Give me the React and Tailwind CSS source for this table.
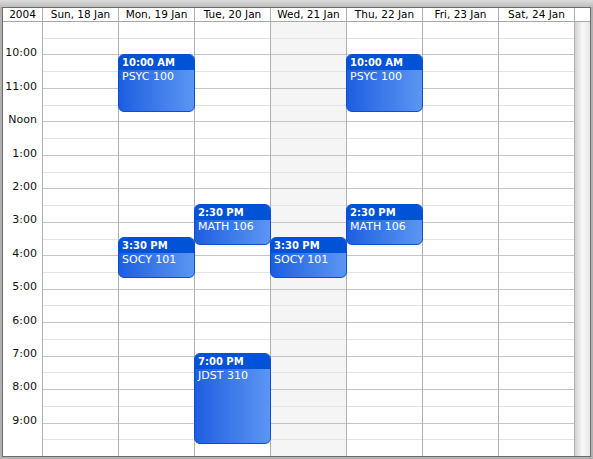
const days = [
  "Sun, 18 Jan",
  "Mon, 19 Jan",
  "Tue, 20 Jan",
  "Wed, 21 Jan",
  "Thu, 22 Jan",
  "Fri, 23 Jan",
  "Sat, 24 Jan",
];

const hours = ["10:00", "11:00", "Noon", "1:00", "2:00", "3:00", "4:00", "5:00", "6:00", "7:00", "8:00", "9:00", ""];

// top / height in px from the 9:00 line
const events = {
  1: [
    { time: "10:00 AM", title: "PSYC 100", top: 32, height: 58 },
    { time: "3:30 PM", title: "SOCY 101", top: 215, height: 41 },
  ],
  2: [
    { time: "2:30 PM", title: "MATH 106", top: 182, height: 41 },
    { time: "7:00 PM", title: "JDST 310", top: 331, height: 91 },
  ],
  3: [{ time: "3:30 PM", title: "SOCY 101", top: 215, height: 41 }],
  4: [
    { time: "10:00 AM", title: "PSYC 100", top: 32, height: 58 },
    { time: "2:30 PM", title: "MATH 106", top: 182, height: 41 },
  ],
};

const rows = Array.from({ length: 26 }, (_, i) => i);

function EventBlock({ ev }) {
  return (
    <div
      className="absolute -left-px w-[77px] rounded-[6px] border border-[#0b4fcf] overflow-hidden flex flex-col bg-gradient-to-r from-[#1d5ee0] to-[#5c95f3] z-10"
      style={{ top: ev.top, height: ev.height }}
    >
      <div className="h-[15px] bg-[#0052d6] text-white font-bold text-[10px] leading-[15px] pl-[3px]">
        {ev.time}
      </div>
      <div className="text-white text-[11px] leading-[14px] pl-[3px]">{ev.title}</div>
    </div>
  );
}

export default function App() {
  return (
    <div
      className="w-[593px] h-[459px] bg-[#b2b2b2] flex flex-col overflow-hidden"
      style={{ fontFamily: '"DejaVu Sans", Verdana, sans-serif' }}
    >
      <div className="h-[7px] bg-gradient-to-b from-[#dcdcdc] to-[#bdbdbd]" />
      <div className="mx-[2px] h-[450px] border border-[#6b6b6b] bg-white flex flex-col">
        {/* header */}
        <div className="h-[14px] flex border-b border-[#a8a8a8] text-[10.5px] leading-[13px] text-black">
          <div className="w-[40px] border-r border-[#b0b0b0] text-center">2004</div>
          {days.map((d) => (
            <div key={d} className="w-[76px] border-r border-[#b0b0b0] text-center">
              {d}
            </div>
          ))}
          <div className="flex-1" />
        </div>

        {/* body */}
        <div className="flex-1 flex">
          <div className="w-[40px] border-r border-[#b0b0b0] flex flex-col text-[11px] text-[#111]">
            {hours.map((h, i) => (
              <div key={i} className="flex-1 flex items-end justify-end pr-[5px]">
                <span className="leading-[12px] translate-y-[4px]">{h}</span>
              </div>
            ))}
          </div>
          {days.map((d, di) => (
            <div
              key={d}
              className={`w-[76px] border-r border-[#b0b0b0] relative flex flex-col ${
                di === 3 ? "bg-[#f5f5f5]" : "bg-white"
              }`}
            >
              {rows.map((r) => (
                <div
                  key={r}
                  className={`flex-1 ${
                    r === 25 ? "" : r % 2 === 0 ? "border-b border-[#e3e3e3]" : "border-b border-[#c4c4c4]"
                  }`}
                />
              ))}
              {(events[di] || []).map((ev, i) => (
                <EventBlock key={i} ev={ev} />
              ))}
            </div>
          ))}
          <div className="flex-1 bg-gradient-to-r from-[#d2d2d2] via-[#f8f8f8] to-[#e8e8e8]" />
        </div>
      </div>
    </div>
  );
}
